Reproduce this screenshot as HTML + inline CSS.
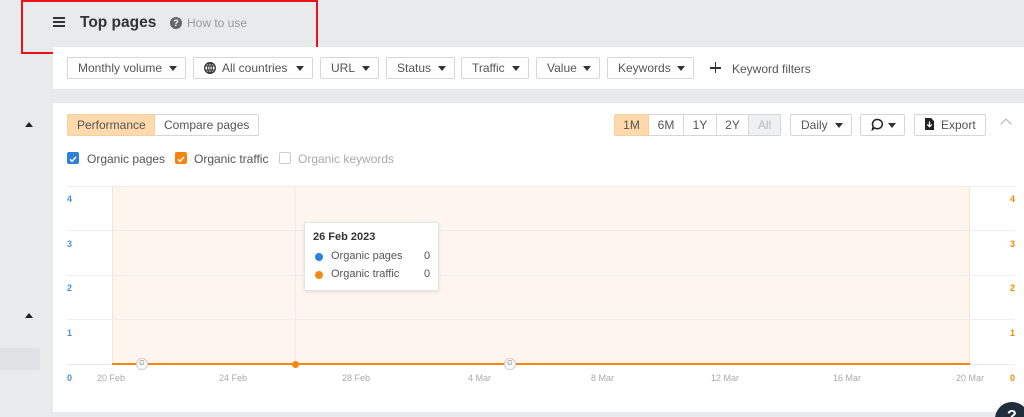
<!DOCTYPE html>
<html style="height:417px;overflow:hidden"><head><meta charset="utf-8"><style>
*{box-sizing:border-box;margin:0;padding:0}
body{width:1024px;height:417px;overflow:hidden;background:#e9eaec;font-family:"Liberation Sans",sans-serif;position:relative;color:#333}
.a{position:absolute}
.btn{position:absolute;height:22px;border:1px solid #d6d6d6;border-radius:2px;background:#fff;font-size:12px;color:#555;line-height:20px;padding-left:10px}
.car{position:absolute;right:8px;top:8px;width:0;height:0;border-left:4px solid transparent;border-right:4px solid transparent;border-top:5px solid #333}
.yl{position:absolute;font-size:9px;color:#4a90d9;font-weight:bold}
.yr{position:absolute;font-size:9px;color:#f08a00;font-weight:bold}
.xl{position:absolute;font-size:9px;color:#aaa;top:373px}
.hl{position:absolute;left:67px;width:948px;height:1px;background:#eeeeee}
.cb{position:absolute;width:12px;height:12px;border-radius:2px;top:152px}
</style></head><body>
<div class="a" style="left:21px;top:0;width:297px;height:54px;border:2px solid #e8141c"></div>
<div class="a" style="left:53px;top:17px;width:12px;height:2px;background:#333;box-shadow:0 4px 0 #333,0 8px 0 #333"></div>
<div class="a" style="left:80px;top:14px;font-size:15.5px;font-weight:bold;color:#333">Top pages</div>
<div class="a" style="left:170px;top:17px;width:12px;height:12px;border-radius:50%;background:#666;color:#fff;font-size:9px;font-weight:bold;text-align:center;line-height:12px">?</div>
<div class="a" style="left:187px;top:16px;font-size:12px;color:#999">How to use</div>

<div class="a" style="left:53px;top:47px;width:971px;height:42px;background:#fff"></div>
<div class="btn" style="left:67px;top:57px;width:119px">Monthly volume<span class="car"></span></div>
<div class="btn" style="left:193px;top:57px;width:120px;padding-left:10px"><svg width="12" height="12" viewBox="0 0 12 12" style="vertical-align:-2px;margin-right:6px"><circle cx="6" cy="6" r="5.3" fill="none" stroke="#333" stroke-width="1.3"/><ellipse cx="6" cy="6" rx="2.3" ry="5.3" fill="none" stroke="#333" stroke-width="1.1"/><path d="M1 4h10M1 8h10M6 .7v10.6" stroke="#333" stroke-width="1"/></svg>All countries<span class="car"></span></div>
<div class="btn" style="left:320px;top:57px;width:59px">URL<span class="car"></span></div>
<div class="btn" style="left:386px;top:57px;width:69px">Status<span class="car"></span></div>
<div class="btn" style="left:461px;top:57px;width:68px">Traffic<span class="car"></span></div>
<div class="btn" style="left:536px;top:57px;width:64px">Value<span class="car"></span></div>
<div class="btn" style="left:607px;top:57px;width:87px">Keywords<span class="car"></span></div>
<div class="a" style="left:710px;top:67px;width:11px;height:1.6px;background:#333"></div>
<div class="a" style="left:714.7px;top:62px;width:1.6px;height:11px;background:#333"></div>
<div class="a" style="left:732px;top:62px;font-size:12px;color:#555">Keyword filters</div>

<div class="a" style="left:25px;top:122px;border-left:4px solid transparent;border-right:4px solid transparent;border-bottom:5px solid #222"></div>
<div class="a" style="left:25px;top:313px;border-left:4px solid transparent;border-right:4px solid transparent;border-bottom:5px solid #222"></div>
<div class="a" style="left:0;top:348px;width:40px;height:22px;background:#dfe1e4;border-radius:0 2px 2px 0"></div>

<div class="a" style="left:53px;top:103px;width:971px;height:309px;background:#fff"></div>
<div class="a" style="left:67px;top:114px;width:88px;height:22px;background:#fdd9ab;border:1px solid #f5cfa0;border-radius:2px 0 0 2px;font-size:12px;line-height:20px;padding-left:9px;color:#555">Performance</div>
<div class="a" style="left:155px;top:114px;width:104px;height:22px;border:1px solid #d6d6d6;border-left:none;border-radius:0 2px 2px 0;font-size:12px;line-height:20px;padding-left:9px;color:#555">Compare pages</div>

<div class="cb" style="left:67px;background:#2f80d9"><svg width="12" height="12"><path d="M3 6.3l2 2 4-4.3" fill="none" stroke="#fff" stroke-width="1.5"/></svg></div>
<div class="a" style="left:87px;top:152px;font-size:12px;color:#555">Organic pages</div>
<div class="cb" style="left:175px;background:#f5840c"><svg width="12" height="12"><path d="M3 6.3l2 2 4-4.3" fill="none" stroke="#fff" stroke-width="1.5"/></svg></div>
<div class="a" style="left:194px;top:152px;font-size:12px;color:#555">Organic traffic</div>
<div class="cb" style="left:279px;border:1px solid #ccc"></div>
<div class="a" style="left:298px;top:152px;font-size:12px;color:#aaa">Organic keywords</div>

<div class="a" style="left:614px;top:114px;width:35px;height:22px;background:#fdd9ab;border:1px solid #f5cfa0;border-radius:2px 0 0 2px;font-size:12px;line-height:20px;text-align:center;color:#555">1M</div>
<div class="a" style="left:649px;top:114px;width:35px;height:22px;border:1px solid #d6d6d6;border-left:none;font-size:12px;line-height:20px;text-align:center;color:#555">6M</div>
<div class="a" style="left:684px;top:114px;width:33px;height:22px;border:1px solid #d6d6d6;border-left:none;font-size:12px;line-height:20px;text-align:center;color:#555">1Y</div>
<div class="a" style="left:717px;top:114px;width:32px;height:22px;border:1px solid #d6d6d6;border-left:none;font-size:12px;line-height:20px;text-align:center;color:#555">2Y</div>
<div class="a" style="left:749px;top:114px;width:32px;height:22px;background:#eef0f2;border:1px solid #d6d6d6;border-left:none;border-radius:0 2px 2px 0;font-size:12px;line-height:20px;text-align:center;color:#bbb">All</div>
<div class="btn" style="left:790px;top:114px;width:62px">Daily<span class="car"></span></div>
<div class="btn" style="left:860px;top:114px;width:45px;padding-left:10px"><svg width="13" height="13" viewBox="0 0 13 13" style="vertical-align:-2px"><path d="M6.5 1.5a5 4.6 0 1 1-3 8.4L1.5 11.5l.7-3A4.6 4.6 0 0 1 6.5 1.5z" fill="none" stroke="#222" stroke-width="1.5"/></svg><span class="car"></span></div>
<div class="btn" style="left:914px;top:114px;width:72px;padding-left:9px"><svg width="11" height="12" viewBox="0 0 11 12" style="vertical-align:-1px;margin-right:6px"><path d="M1 0h6l3 3v9H1z" fill="#222"/><path d="M5.5 3.5v5M3.3 6.5l2.2 2.2 2.2-2.2" fill="none" stroke="#fff" stroke-width="1.3"/></svg>Export</div>
<div class="a" style="left:1002px;top:120px;width:8px;height:8px;border-left:1.5px solid #aaa;border-top:1.5px solid #aaa;transform:rotate(45deg)"></div>

<div class="a" style="left:112px;top:186px;width:858px;height:178px;background:#fef6ee;border-left:1px solid #fbe3cc;border-right:1px solid #fbe3cc"></div>
<div class="hl" style="top:186px"></div><div class="hl" style="top:230px"></div><div class="hl" style="top:275px"></div><div class="hl" style="top:319px"></div><div class="hl" style="top:364px;background:#e9e9e9"></div>
<div class="a" style="left:295px;top:186px;width:1px;height:178px;background:#ececec"></div>
<div class="a" style="left:112px;top:363px;width:858px;height:2px;background:#f5890f"></div>
<div class="a" style="left:292px;top:361px;width:7px;height:7px;border-radius:50%;background:#f5890f"></div>
<div class="a" style="left:136px;top:358px;width:12px;height:12px;border-radius:50%;background:#fff;border:1px solid #ccc;font-size:7px;color:#888;text-align:center;line-height:10px">G</div>
<div class="a" style="left:504px;top:358px;width:12px;height:12px;border-radius:50%;background:#fff;border:1px solid #ccc;font-size:7px;color:#888;text-align:center;line-height:10px">G</div>

<div class="yl" style="left:67px;top:194px">4</div><div class="yl" style="left:67px;top:239px">3</div><div class="yl" style="left:67px;top:283px">2</div><div class="yl" style="left:67px;top:328px">1</div><div class="yl" style="left:67px;top:373px">0</div>
<div class="yr" style="left:1010px;top:194px">4</div><div class="yr" style="left:1010px;top:239px">3</div><div class="yr" style="left:1010px;top:283px">2</div><div class="yr" style="left:1010px;top:328px">1</div><div class="yr" style="left:1010px;top:373px">0</div>
<div class="xl" style="left:97px">20 Feb</div><div class="xl" style="left:219px">24 Feb</div><div class="xl" style="left:342px">28 Feb</div><div class="xl" style="left:468px">4 Mar</div><div class="xl" style="left:591px">8 Mar</div><div class="xl" style="left:711px">12 Mar</div><div class="xl" style="left:833px">16 Mar</div><div class="xl" style="left:956px">20 Mar</div>

<div class="a" style="left:304px;top:222px;width:135px;height:69px;background:#fff;border:1px solid #e4e4e4;border-radius:2px;box-shadow:0 1px 3px rgba(0,0,0,.1)"></div>
<div class="a" style="left:313px;top:231px;font-size:11px;font-weight:bold;color:#333">26 Feb 2023</div>
<div class="a" style="left:315px;top:253px;width:8px;height:8px;border-radius:50%;background:#2f80d9"></div>
<div class="a" style="left:331px;top:250px;font-size:11px;color:#555">Organic pages</div>
<div class="a" style="left:424px;top:250px;font-size:11px;color:#555">0</div>
<div class="a" style="left:315px;top:271px;width:8px;height:8px;border-radius:50%;background:#f5890f"></div>
<div class="a" style="left:331px;top:268px;font-size:11px;color:#555">Organic traffic</div>
<div class="a" style="left:424px;top:268px;font-size:11px;color:#555">0</div>

<div class="a" style="left:995px;top:402px;width:34px;height:15px;overflow:hidden"><div style="width:34px;height:34px;border-radius:50%;background:#1f2d3d;color:#fff;font-size:16px;font-weight:bold;padding:6px 0 0 12px">?</div></div>
</body></html>
